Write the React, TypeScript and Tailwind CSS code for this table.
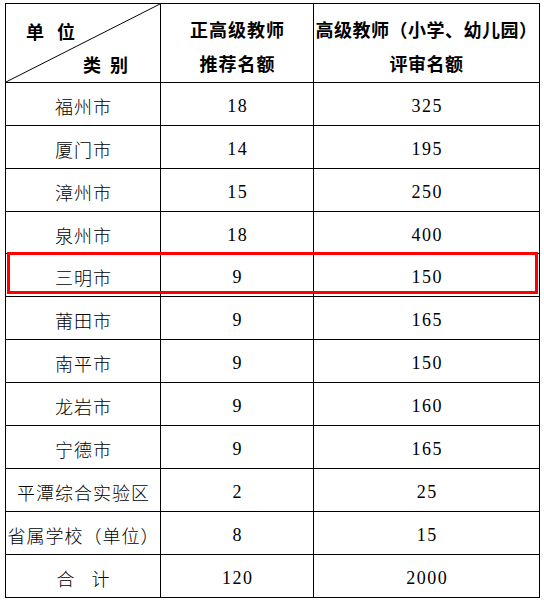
import React from "react";

const rows: [string, string, string, string?][] = [
  ["福州市", "18", "325"],
  ["厦门市", "14", "195"],
  ["漳州市", "15", "250"],
  ["泉州市", "18", "400"],
  ["三明市", "9", "150"],
  ["莆田市", "9", "165"],
  ["南平市", "9", "150"],
  ["龙岩市", "9", "160"],
  ["宁德市", "9", "165"],
  ["平潭综合实验区", "2", "25"],
  ["省属学校（单位）", "8", "15"],
  ["合计", "120", "2000", "total"],
];

const cjk = { fontFamily: '"Noto Sans CJK SC", "Noto Sans", sans-serif' };
const num = { fontFamily: '"Liberation Serif", serif' };

export default function App() {
  return (
    <div className="bg-white w-[544px] h-[601px] pt-[3px] pl-[5px]">
      <div className="relative w-[535px] border-l border-t border-black grid grid-cols-[155px_153px_226px] grid-rows-[79px_43px_43px_43px_42px_43px_43px_43px_43px_43px_43px_43px_43px] text-black">
        {/* header */}
        <div className="relative border-r border-b border-black font-bold text-[18px] leading-[34px]" style={cjk}>
          <svg className="absolute inset-0 w-full h-full" preserveAspectRatio="none" viewBox="0 0 154 78">
            <line x1="0" y1="78" x2="154" y2="0" stroke="#000" strokeWidth="1" vectorEffect="non-scaling-stroke" />
          </svg>
          <div className="pl-[20px] pt-[18px] tracking-[13px] leading-[18px]">单位</div>
          <div className="pl-[77px] pt-[15px] tracking-[9px] leading-[18px]">类别</div>
        </div>
        <div className="border-r border-b border-black flex flex-col items-center justify-center pt-[6px] font-bold text-[18px] leading-[34px] tracking-[1px]" style={cjk}>
          <div className="pl-[1px]">正高级教师</div>
          <div className="pl-[1px]">推荐名额</div>
        </div>
        <div className="border-r border-b border-black flex flex-col items-center justify-center pt-[6px] font-bold text-[18px] leading-[34px] tracking-[0.5px]" style={cjk}>
          <div className="whitespace-nowrap">高级教师（小学、幼儿园）</div>
          <div>评审名额</div>
        </div>
        {rows.map(([name, a, b, t]) => (
          <React.Fragment key={name}>
            <div className="border-r border-b border-black flex items-center justify-center pt-[5px]">
              <span
                className={
                  t
                    ? "text-[18px] font-light tracking-[17px] pl-[17px] whitespace-nowrap"
                    : "text-[18px] font-light tracking-[1px] pl-[1px] whitespace-nowrap"
                }
                style={cjk}
              >
                {name}
              </span>
            </div>
            <div className="border-r border-b border-black flex items-center justify-center pt-[5px]">
              <span className="text-[18px] tracking-[1.5px] pl-[1.5px]" style={num}>
                {a}
              </span>
            </div>
            <div className="border-r border-b border-black flex items-center justify-center pt-[5px]">
              <span className="text-[18px] tracking-[1.5px] pl-[1.5px]" style={num}>
                {b}
              </span>
            </div>
          </React.Fragment>
        ))}
        <div className="absolute left-[1px] top-[248px] w-[531px] h-[42px] border-[3px] border-[#ff0000] pointer-events-none" />
      </div>
    </div>
  );
}
